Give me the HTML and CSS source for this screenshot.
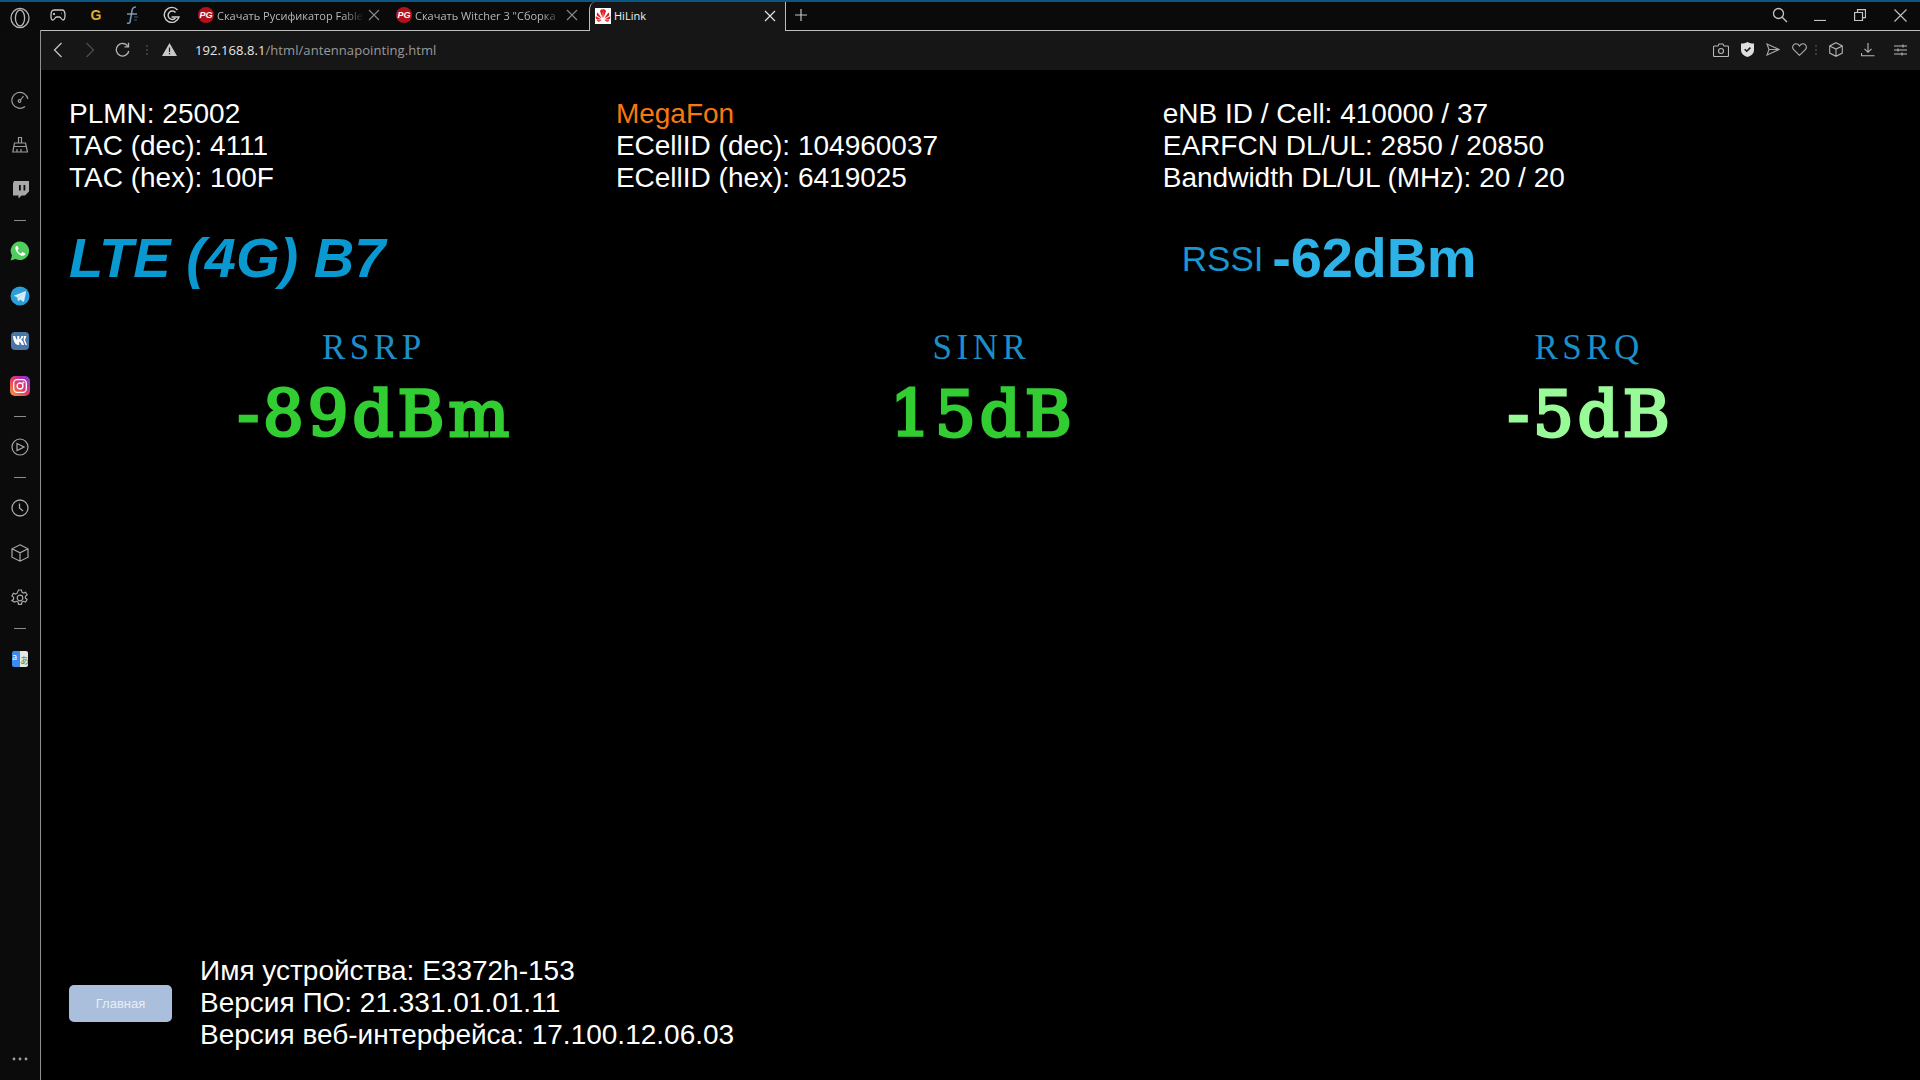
FILE: index.html
```html
<!DOCTYPE html>
<html>
<head>
    <meta charset="UTF-8">
    <title>HiLink</title>
    <link rel="stylesheet" href="styles.css">
</head>
<body>
<div class="tabstrip">
    <div class="logo-slot">
        <svg width="20" height="22" viewBox="0 0 20 22" fill="none" stroke="#b5b5b5" stroke-width="1.3"><ellipse cx="10" cy="11" rx="9" ry="9.6"/><ellipse cx="10" cy="11" rx="4.6" ry="8"/></svg>
    </div>
    <div class="pin pin-a">
        <svg width="16" height="14" viewBox="0 0 16 14" fill="none" stroke="#c8c8c8" stroke-width="1.3"><path d="M4 2h8c2 0 3 2 3 5s0 5-2 5c-1.500 0-2-3-3.500-3h-3C5 9 4.500 12 3 12c-2 0-2-2-2-5s1-5 3-5z"/><path d="M4 5v2M3 6h2M11.500 5.500h.5"/></svg>
    </div>
    <div class="pin pin-b"><span class="pin-g">G</span></div>
    <div class="pin pin-c">
        <svg width="16" height="20" viewBox="0 0 16 20" fill="none"><path d="M12 2C8 2 8 5 7.500 9L6 17c-.3 1.500-2 1.500-3 1" stroke="#6f93b8" stroke-width="1.600"/><path d="M3 9h10" stroke="#9db4c9" stroke-width="1.200"/><path d="M10 12h4M10 15h3" stroke="#3f5d78" stroke-width="1.200"/></svg>
    </div>
    <div class="pin pin-d">
        <svg width="18" height="18" viewBox="0 0 18 18" fill="none" stroke="#cfcfcf" stroke-width="1.400"><path d="M14.500 4A7.500 7.500 0 1 0 16 11H8.500"/><path d="M12.500 6.500A4.200 4.200 0 1 0 12.500 12"/></svg>
    </div>
    <div class="tab">
        <span class="pg-icon">PG</span>
        <span class="tab-title">Скачать Русификатор Fable</span>
        <svg class="tab-close" width="12" height="12" viewBox="0 0 12 12" stroke="#8a8a8a" stroke-width="1.100"><path d="M1 1l10 10M11 1L1 11"/></svg>
    </div>
    <div class="tab">
        <span class="pg-icon">PG</span>
        <span class="tab-title">Скачать Witcher 3 "Сборка</span>
        <svg class="tab-close" width="12" height="12" viewBox="0 0 12 12" stroke="#8a8a8a" stroke-width="1.100"><path d="M1 1l10 10M11 1L1 11"/></svg>
    </div>
    <div class="tab tab-active">
        <span class="huawei-icon">
            <svg width="16" height="16" viewBox="0 0 16 16" fill="#e0161b"><path d="M7.500 10L5 3c.8-1.600 2.400-2 3-1.500zM8.500 10L11 3c-.8-1.600-2.400-2-3-1.500zM6.800 10.500L2.600 4.500C1.600 5.600 1.500 7 2.400 8zM9.200 10.500l4.200-6c1 1.100 1.100 2.500.2 3.500zM6.500 11.500L.8 8.200C.4 9.800 1 11 2.200 11.500zM9.500 11.500l5.700-3.300c.4 1.600-.2 2.800-1.400 3.300zM6.800 12.300H1.500c.5 1.200 2 1.800 3 1.300zM9.200 12.300h5.300c-.5 1.200-2 1.800-3 1.300z"/></svg>
        </span>
        <span class="tab-title tab-title-active">HiLink</span>
        <svg class="tab-close" width="12" height="12" viewBox="0 0 12 12" stroke="#e2e2e2" stroke-width="1.200"><path d="M1 1l10 10M11 1L1 11"/></svg>
    </div>
    <div class="new-tab">
        <svg width="12" height="12" viewBox="0 0 12 12" stroke="#c4c4c4" stroke-width="1.200"><path d="M6 0v12M0 6h12"/></svg>
    </div>
    <div class="win-controls">
        <svg class="win-search" width="16" height="16" viewBox="0 0 16 16" fill="none" stroke="#c4c4c4" stroke-width="1.300"><circle cx="6.500" cy="6.500" r="5"/><path d="M10.200 10.200L15 15"/></svg>
        <span class="win-btn"><svg width="12" height="12" viewBox="0 0 12 12" stroke="#c4c4c4" stroke-width="1.200"><path d="M0 11.500h12"/></svg></span>
        <span class="win-btn"><svg width="12" height="12" viewBox="0 0 12 12" fill="none" stroke="#c4c4c4" stroke-width="1.200"><path d="M.6 3.500h7.900v8H.6zM3.500 3.500V.6h8v8H8.500"/></svg></span>
        <span class="win-btn"><svg width="13" height="13" viewBox="0 0 13 13" stroke="#c4c4c4" stroke-width="1.100"><path d="M.5.5l12 12M12.500.5l-12 12"/></svg></span>
    </div>
</div>

<div class="window">
    <div class="sidebar">
        <div class="side-item"><svg width="18" height="18" viewBox="0 0 18 18" fill="none" stroke="#9c9c9c" stroke-width="1.200"><path d="M14 15.500A8 8 0 1 1 16.800 8"/><circle cx="8.500" cy="10" r="1.300"/><path d="M9.500 9l3-4"/><path d="M16.800 11v.1M15.800 13.500v.1"/></svg></div>
        <div class="side-item"><svg width="16" height="17" viewBox="0 0 16 17" fill="none" stroke="#9c9c9c" stroke-width="1.200"><path d="M6.500 7V1.500h3V7"/><path d="M2.500 7h11l2 9H.8z"/><path d="M2 10.500h12M5 13v3M9 13v3"/></svg></div>
        <div class="side-item"><svg width="17" height="18" viewBox="0 0 17 18" fill="#a8a8a8"><path d="M2 0h15v10.500L13 14.500H9.500L6.500 17.500V14.500H1V2.500z"/><path fill="#0c0c0c" d="M7 4h1.800v5.500H7zM11.500 4h1.800v5.500h-1.800z"/></svg></div>
        <div class="side-sep"></div>
        <div class="side-item"><svg width="20" height="20" viewBox="0 0 20 20"><path fill="#4fce5d" d="M10 .5a9.300 9.300 0 0 0-8 14L.6 19.400l5-1.300A9.300 9.300 0 1 0 10 .5z"/><path fill="#fff" d="M6.800 4.800c-.9.300-1.600 1.300-1.500 2.500.3 3.500 4 7.300 7.500 7.500 1.300 0 2.300-.8 2.500-1.700.1-.4 0-.7-.4-.9l-2-1c-.4-.2-.6-.1-.9.200l-.7.900c-.2.200-.4.300-.7.100-1.200-.5-2.400-1.600-3-2.900-.1-.3 0-.5.200-.7l.6-.7c.2-.3.200-.5.100-.8l-.8-1.900c-.2-.4-.5-.5-.9-.4z"/></svg></div>
        <div class="side-item"><svg width="20" height="20" viewBox="0 0 20 20"><circle cx="10" cy="10" r="9.500" fill="#2a9ed8"/><path fill="#d5ecf8" d="M3.800 9.800l11.400-4.500c.5-.2 1 .1.800.9l-1.900 9c-.1.600-.5.800-1 .5l-2.900-2.100-1.400 1.400c-.2.200-.4.200-.5-.1l-1-3.400z"/><path fill="#a9d6ee" d="M7.300 11.500l.4 3 .8-2.400 5.400-5z"/></svg></div>
        <div class="side-item"><span class="vk-icon">
            <svg width="14" height="9" viewBox="0 0 14 9" fill="#fff"><path d="M0 0h2.300c.3 2 1.200 3.600 1.900 4V0H6.300v3.300C7.200 3.200 8 1.600 8.400 0h2.100c-.3 1.700-1.500 3-2.400 3.700C9.100 4.300 10.400 5.500 11 9H8.700C8.200 7.300 7.200 6 6.300 5.800V9H5.700C2.500 9 .5 6 0 0z"/><path d="M11 0h2.400L12 4l2 5h-1.500L10.500 4.300z"/></svg>
        </span></div>
        <div class="side-item"><span class="insta-icon">
            <svg width="14" height="14" viewBox="0 0 14 14" fill="none" stroke="#fff" stroke-width="1.300"><rect x=".7" y=".7" width="12.600" height="12.600" rx="3.500"/><circle cx="7" cy="7" r="3"/><circle cx="10.500" cy="3.500" r=".4"/></svg>
        </span></div>
        <div class="side-sep"></div>
        <div class="side-item"><svg width="18" height="18" viewBox="0 0 18 18" fill="none" stroke="#a8a8a8" stroke-width="1.200"><circle cx="9" cy="9" r="8"/><path d="M6 5.500L13 9l-7 3.500z"/></svg></div>
        <div class="side-sep"></div>
        <div class="side-item"><svg width="18" height="18" viewBox="0 0 18 18" fill="none" stroke="#a8a8a8" stroke-width="1.300"><circle cx="9" cy="9" r="8"/><path d="M8.500 4.500V9l3.500 3"/></svg></div>
        <div class="side-item"><svg width="18" height="18" viewBox="0 0 18 18" fill="none" stroke="#a8a8a8" stroke-width="1.200"><path d="M9 .8l8 4v8.400l-8 4-8-4V4.800zM1 4.800l8 4 8-4M9 8.800v8.400"/></svg></div>
        <div class="side-item"><svg width="18" height="18" viewBox="0 0 18 18" fill="none" stroke="#a8a8a8" stroke-width="1.200"><circle cx="9" cy="9" r="2.800"/><path d="M7.500 1h3l.4 2.200 1.600.9 2.100-.8 1.500 2.600-1.700 1.400v1.800l1.700 1.400-1.500 2.600-2.100-.8-1.600.9-.4 2.200h-3l-.4-2.200-1.600-.9-2.100.8L.9 11.500l1.700-1.400V8.300L.9 6.900l1.500-2.600 2.100.8 1.600-.9z"/></svg></div>
        <div class="side-sep"></div>
        <div class="side-item"><span class="translate-icon"><span class="tr-a">a</span><span class="tr-b">あ</span></span></div>
        <div class="side-more">
            <svg width="16" height="4" viewBox="0 0 16 4" fill="#a0a0a0"><circle cx="2" cy="2" r="1.400"/><circle cx="8" cy="2" r="1.400"/><circle cx="14" cy="2" r="1.400"/></svg>
        </div>
    </div>

    <div class="browser">
        <div class="toolbar">
            <div class="nav-btn nav-back"><svg width="10" height="16" viewBox="0 0 10 16" fill="none" stroke="#c2c2c2" stroke-width="1.300"><path d="M8.500 1L1.500 8l7 7"/></svg></div>
            <div class="nav-btn"><svg width="10" height="16" viewBox="0 0 10 16" fill="none" stroke="#4c4c4c" stroke-width="1.300"><path d="M1.500 1l7 7-7 7"/></svg></div>
            <div class="nav-btn"><svg width="15" height="15" viewBox="0 0 15 15" fill="none" stroke="#b4b4b4" stroke-width="1.300"><path d="M13 4.500A6.300 6.300 0 1 0 13.800 9"/><path d="M13.500 .8v4h-4" /></svg></div>
            <div class="nav-dots"></div>
            <div class="warn-icon"><svg width="15" height="13" viewBox="0 0 15 13"><path fill="#c8c8c8" d="M7.500 0L15 13H0z"/><path fill="#161616" d="M6.900 4.500h1.200v4.500H6.900zM6.900 10h1.200v1.300H6.900z"/></svg></div>
            <div class="address"><span class="addr-host">192.168.8.1</span>/html/antennapointing.html</div>
            <div class="tools">
                <span class="tool"><svg width="16" height="14" viewBox="0 0 16 14" fill="none" stroke="#b8b8b8" stroke-width="1.100"><path d="M1.500 3H5l1-2h4l1 2h3.500a1 1 0 0 1 1 1v8.500a1 1 0 0 1-1 1h-13a1 1 0 0 1-1-1V4a1 1 0 0 1 1-1z"/><circle cx="8" cy="8" r="2.500"/></svg></span>
                <span class="tool"><svg width="13" height="15" viewBox="0 0 13 15"><path fill="#dedede" d="M6.500 0c2 1 4 1.500 6.500 1.500V8c0 3.500-3 6-6.500 7C3 14 0 11.500 0 8V1.500C2.500 1.500 4.500 1 6.500 0z"/><path fill="none" stroke="#161616" stroke-width="1.500" d="M3.700 7.300l2 2 3.700-3.700"/></svg></span>
                <span class="tool"><svg width="14" height="13" viewBox="0 0 14 13" fill="none" stroke="#a8a8a8" stroke-width="1.100"><path d="M1 1l12 5.500L1 12l2-5.500zM3 6.500h10"/></svg></span>
                <span class="tool"><svg width="15" height="13" viewBox="0 0 15 13" fill="none" stroke="#b0b0b0" stroke-width="1.100"><path d="M7.500 12.300L1.700 6.700C-.5 4.400 1.100.8 4 .8c1.500 0 2.700.8 3.500 2.200C8.300 1.600 9.500.8 11 .8c2.900 0 4.500 3.600 2.300 5.900z"/></svg></span>
                <span class="tool-dots"></span>
                <span class="tool tool-wide"><svg width="14" height="15" viewBox="0 0 14 15" fill="none" stroke="#b0b0b0" stroke-width="1.100"><path d="M7 .7l6.300 3.200v7.200L7 14.300.7 11.100V3.900zM.7 3.900L7 7.100l6.300-3.200M7 7.100v7.200"/></svg></span>
                <span class="tool tool-wide"><svg width="14" height="14" viewBox="0 0 14 14" fill="none" stroke="#b8b8b8" stroke-width="1.100"><path d="M7 0v9M3.500 5.800L7 9.300l3.500-3.500M.5 10v2.800h13"/></svg></span>
                <span class="tool tool-wide"><svg width="13" height="12" viewBox="0 0 13 12" fill="none" stroke="#b8b8b8" stroke-width="1.100"><path d="M0 2h13M0 6h13M0 10h13M9 .5v3M4 4.500v3M8 8.500v3"/></svg></span>
            </div>
        </div>

        <div class="page">
            <div class="info-row">
                <div class="info-col">
                    <div>PLMN: 25002</div>
                    <div>TAC (dec): 4111</div>
                    <div>TAC (hex): 100F</div>
                </div>
                <div class="info-col">
                    <div class="operator">MegaFon</div>
                    <div>ECellID (dec): 104960037</div>
                    <div>ECellID (hex): 6419025</div>
                </div>
                <div class="info-col">
                    <div>eNB ID / Cell: 410000 / 37</div>
                    <div>EARFCN DL/UL: 2850 / 20850</div>
                    <div>Bandwidth DL/UL (MHz): 20 / 20</div>
                </div>
            </div>

            <div class="mode-row">
                <div class="mode">LTE (4G) B7</div>
                <div class="rssi"><span class="rssi-label">RSSI</span> <span class="rssi-value">-62dBm</span></div>
            </div>

            <div class="metrics">
                <div class="metric">
                    <div class="metric-name">RSRP</div>
                    <div class="metric-value good">-89dBm</div>
                </div>
                <div class="metric">
                    <div class="metric-name">SINR</div>
                    <div class="metric-value good">15dB</div>
                </div>
                <div class="metric">
                    <div class="metric-name">RSRQ</div>
                    <div class="metric-value great">-5dB</div>
                </div>
            </div>

            <div class="bottom">
                <div class="home-btn">Главная</div>
                <div class="device">
                    <div>Имя устройства: E3372h-153</div>
                    <div>Версия ПО: 21.331.01.01.11</div>
                    <div>Версия веб-интерфейса: 17.100.12.06.03</div>
                </div>
            </div>
        </div>
    </div>
</div>
</body>
</html>
```

FILE: styles.css
```css
*{ margin: 0; padding: 0; box-sizing: border-box;}
html,body{ height: 100%;}
body{
    background: #000;
    overflow: hidden;
    display: flex;
    flex-direction: column;
    font-family: "Liberation Sans", Arial, sans-serif;
    color: #fff;
}

/* tab strip */
.tabstrip{
    height: 31px;
    flex: none;
    display: flex;
    align-items: stretch;
    background: #0a0a0a;
    border-top: 2px solid #0b5782;
}
.logo-slot{
    width: 40px;
    display: flex;
    align-items: center;
    justify-content: center;
    padding-top: 2px;
}
.pin{
    display: flex;
    align-items: center;
    justify-content: center;
    border-bottom: 1px solid #bdbdbd;
    height: 29px;
    padding-bottom: 2px;
}
.pin-a{ width: 36px;}
.pin-b{ width: 40px;}
.pin-c{ width: 32px;}
.pin-d{ width: 48px;}
.pin-g{
    font-size: 14px;
    font-weight: bold;
    color: #e2b020;
}
.tab{
    width: 198px;
    display: flex;
    align-items: center;
    gap: 3px;
    padding: 0 14px 2px 2px;
    border-bottom: 1px solid #bdbdbd;
}
.tab-active{
    width: 197px;
    margin-left: -3px;
    background: #161616;
    border-bottom: none;
    border-left: 1px solid #bdbdbd;
    border-right: 1px solid #bdbdbd;
    border-top-left-radius: 6px 8px;
    padding: 0 9px 2px 5px;
    gap: 3px;
}
.pg-icon{
    width: 16px;
    height: 16px;
    flex: none;
    border-radius: 50%;
    background: #b3121b;
    color: #fff;
    font-size: 9px;
    font-weight: bold;
    font-style: italic;
    line-height: 16px;
    text-align: center;
}
.huawei-icon{
    width: 16px;
    height: 16px;
    flex: none;
    background: #fff;
    display: block;
}
.huawei-icon svg{ display: block;}
.tab-title{
    flex: 1;
    min-width: 0;
    overflow: hidden;
    white-space: nowrap;
    font-family: "Open Sans", sans-serif;
    font-size: 11px;
    color: #b8b8b8;
    -webkit-mask-image: linear-gradient(to right, #000 85%, transparent 100%);
    mask-image: linear-gradient(to right, #000 85%, transparent 100%);
}
.tab-title-active{
    color: #f2f2f2;
    -webkit-mask-image: none;
    mask-image: none;
}
.tab-close{ flex: none;}
.new-tab{
    width: 30px;
    display: flex;
    align-items: center;
    justify-content: center;
    border-bottom: 1px solid #bdbdbd;
    padding-bottom: 2px;
}
.win-controls{
    flex: 1;
    display: flex;
    align-items: center;
    justify-content: flex-end;
    border-bottom: 1px solid #bdbdbd;
    padding-bottom: 2px;
}
.win-search{ margin-right: 12px;}
.win-btn{
    width: 40px;
    display: flex;
    align-items: center;
    justify-content: center;
}

.window{
    flex: 1;
    display: flex;
    min-height: 0;
}

/* left panel */
.sidebar{
    width: 41px;
    flex: none;
    background: #0b0b0b;
    border-right: 1px solid #909090;
    margin-top: -1px;
    padding-top: 47px;
    display: flex;
    flex-direction: column;
    align-items: center;
    position: relative;
    z-index: 2;
}
.side-item{
    height: 45px;
    flex: none;
    display: flex;
    align-items: center;
    justify-content: center;
}
.side-sep{
    height: 16px;
    flex: none;
    display: flex;
    align-items: center;
}
.side-sep:before{
    content: "";
    width: 12px;
    height: 1px;
    background: #8c8c8c;
}
.vk-icon{
    width: 18px;
    height: 18px;
    border-radius: 4px;
    background: #4a76a8;
    display: flex;
    align-items: center;
    justify-content: center;
}
.insta-icon{
    width: 20px;
    height: 20px;
    border-radius: 5px;
    background: linear-gradient(45deg, #f9a03c 0%, #e8405a 45%, #b52cb0 75%, #5a4fcf 100%);
    display: flex;
    align-items: center;
    justify-content: center;
}
.translate-icon{
    width: 16px;
    height: 16px;
    border-radius: 2px;
    overflow: hidden;
    display: flex;
    font-family: "Noto Sans CJK JP", "Liberation Sans", sans-serif;
    font-size: 9px;
    line-height: 12px;
}
.tr-a{
    width: 8px;
    background: #3b8cf0;
    color: #fff;
}
.tr-b{
    width: 8px;
    background: #e3e8e0;
    color: #4c8a3a;
    padding-top: 4px;
}
.side-more{
    margin-top: auto;
    height: 42px;
    display: flex;
    align-items: center;
}

/* address bar */
.browser{
    flex: 1;
    min-width: 0;
    display: flex;
    flex-direction: column;
}
.toolbar{
    height: 39px;
    flex: none;
    background: #161616;
    display: flex;
    align-items: center;
    padding: 0 4px 2px 0;
}
.nav-btn{
    width: 32px;
    display: flex;
    align-items: center;
    justify-content: center;
}
.nav-back{ margin-left: 1px;}
.nav-dots{
    width: 2px;
    height: 10px;
    margin: 0 14px 0 8px;
    background: repeating-linear-gradient(to bottom, #3a3a3a 0 2px, transparent 2px 4px);
}
.warn-icon{
    width: 15px;
    display: flex;
    margin-right: 18px;
}
.address{
    font-family: "Open Sans", sans-serif;
    font-size: 13px;
    letter-spacing: .07px;
    color: #9a9a9a;
    white-space: nowrap;
}
.addr-host{ color: #e6e6e6;}
.tools{
    margin-left: auto;
    display: flex;
    align-items: center;
}
.tool{
    width: 26px;
    display: flex;
    align-items: center;
    justify-content: center;
}
.tool-wide{ width: 32px;}
.tool-dots{
    width: 2px;
    height: 10px;
    margin: 0 3px;
    background: repeating-linear-gradient(to bottom, #3a3a3a 0 2px, transparent 2px 4px);
}

/* page */
.page{
    flex: 1;
    min-height: 0;
    background: #000;
    padding: 28px 28px 29px 28px;
    display: flex;
    flex-direction: column;
    font-size: 28px;
    line-height: 32px;
}
.info-row{ display: flex;}
.info-col{ width: 30%;}
.operator{ color: #f7780e;}
.mode-row{
    display: flex;
    align-items: baseline;
    margin-top: 29px;
}
.mode{
    width: 60%;
    font-size: 56px;
    line-height: 70px;
    font-weight: bold;
    font-style: italic;
    color: #0a98d0;
}
.rssi{
    padding-left: 19px;
    white-space: nowrap;
}
.rssi-label{
    font-size: 35px;
    color: #1a97d0;
    vertical-align: 6px;
}
.rssi-value{
    font-size: 56px;
    font-weight: bold;
    color: #2cb2e6;
    margin-left: 1px;
    letter-spacing: -.2px;
}
.metrics{
    display: flex;
    margin-top: 32px;
    text-align: center;
}
.metric{ width: 33.333%;}
.metric-name{
    font-family: "Liberation Serif", serif;
    font-size: 35px;
    letter-spacing: 4.5px;
    line-height: 46px;
    padding-left: 2px;
    color: #1a8fc8;
}
.metric-value{
    font-family: "DejaVu Serif", serif;
    font-size: 64px;
    letter-spacing: 4px;
    line-height: 87px;
    padding-left: 5px;
    -webkit-text-stroke: 3px currentColor;
}
.good{ color: #32cd32;}
.great{ color: #98fb98;}
.bottom{
    margin-top: auto;
    display: flex;
    align-items: center;
    gap: 28px;
}
.home-btn{
    width: 103px;
    height: 37px;
    background: #a9bfdb;
    border-radius: 5px;
    color: #e8eef6;
    font-size: 13px;
    line-height: 37px;
    text-align: center;
}
```
